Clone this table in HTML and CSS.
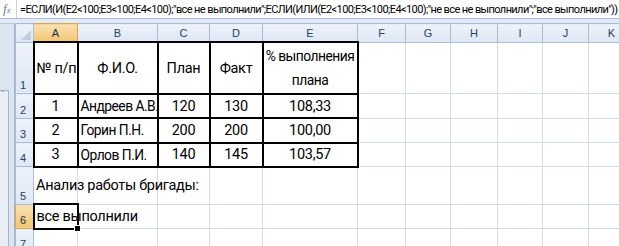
FILE: index.html
```html
<!DOCTYPE html>
<html lang="ru">
<head>
<meta charset="utf-8">
<link rel="stylesheet" href="styles.css">
</head>
<body>
<div class="fbar">
  <span class="fx">f<i>x</i></span>
  <span class="formula">=ЕСЛИ(И(E2&lt;100;E3&lt;100;E4&lt;100);"все не выполнили";ЕСЛИ(ИЛИ(E2&lt;100;E3&lt;100;E4&lt;100);"не все не выполнили";"все выполнили"))</span>
</div>
<div class="main">
  <div class="strip"><div class="strip-box"><span class="caret">&#710;</span></div></div>
  <table class="sheet">
    <colgroup>
      <col class="c-rh"><col class="c-a"><col class="c-b"><col class="c-c"><col class="c-d"><col class="c-e"><col class="c-f"><col class="c-g"><col class="c-h"><col class="c-i"><col class="c-j"><col class="c-k">
    </colgroup>
    <tr class="r-head">
      <th class="corner"><span class="tri"></span></th>
      <th class="ch sel">A</th><th class="ch">B</th><th class="ch">C</th><th class="ch">D</th><th class="ch">E</th><th class="ch">F</th><th class="ch">G</th><th class="ch">H</th><th class="ch">I</th><th class="ch">J</th><th class="ch">K</th>
    </tr>
    <tr class="r1">
      <th class="rh">1</th>
      <td class="t ctr">№ п/п</td><td class="t ctr">Ф.И.О.</td><td class="t ctr">План</td><td class="t ctr">Факт</td><td class="t ctr wrap">% выполнения плана</td>
      <td></td><td></td><td></td><td></td><td></td><td></td>
    </tr>
    <tr class="rd">
      <th class="rh">2</th>
      <td class="t ctr">1</td><td class="t nm">Андреев А.В.</td><td class="t ctr">120</td><td class="t ctr">130</td><td class="t ctr">108,33</td>
      <td></td><td></td><td></td><td></td><td></td><td></td>
    </tr>
    <tr class="rd">
      <th class="rh">3</th>
      <td class="t ctr">2</td><td class="t nm">Горин П.Н.</td><td class="t ctr">200</td><td class="t ctr">200</td><td class="t ctr">100,00</td>
      <td></td><td></td><td></td><td></td><td></td><td></td>
    </tr>
    <tr class="rd">
      <th class="rh">4</th>
      <td class="t ctr">3</td><td class="t nm">Орлов П.И.</td><td class="t ctr">140</td><td class="t ctr">145</td><td class="t ctr">103,57</td>
      <td></td><td></td><td></td><td></td><td></td><td></td>
    </tr>
    <tr class="r5">
      <th class="rh">5</th>
      <td class="ov">Анализ работы бригады:</td><td></td><td></td><td></td><td></td>
      <td></td><td></td><td></td><td></td><td></td><td></td>
    </tr>
    <tr class="rd">
      <th class="rh sel">6</th>
      <td class="ov active">все выполнили<span class="handle"></span></td><td></td><td></td><td></td><td></td>
      <td></td><td></td><td></td><td></td><td></td><td></td>
    </tr>
    <tr class="rd">
      <th class="rh">7</th>
      <td></td><td></td><td></td><td></td><td></td>
      <td></td><td></td><td></td><td></td><td></td><td></td>
    </tr>
  </table>
</div>
</body>
</html>
```
FILE: styles.css
```css
html, body {
  margin: 0;
  padding: 0;
}
body {
  width: 619px;
  height: 246px;
  overflow: hidden;
  background: #e3ebf6;
  font-family: "Liberation Sans", Arial, sans-serif;
}
.fbar {
  height: 18px;
  background: #fff;
  border-bottom: 1px solid #a9bdd6;
  display: flex;
  align-items: center;
  white-space: nowrap;
  overflow: hidden;
}
.fx {
  width: 17px;
  flex: 0 0 17px;
  box-sizing: border-box;
  border-right: 1px solid #c5d2e3;
  height: 18px;
  font-family: "Liberation Serif", serif;
  font-style: italic;
  font-size: 13px;
  color: #6e7f96;
  line-height: 17px;
  padding-left: 3px;
}
.fx i {
  font-size: 9px;
}
.formula {
  padding-left: 3px;
  font-family: Roboto, sans-serif;
  font-size: 11px;
  letter-spacing: -0.6px;
  color: #000;
}
.main {
  display: flex;
  margin-top: 4px;
}
.strip {
  width: 15px;
  flex: 0 0 15px;
  height: 230px;
  box-sizing: border-box;
  background: #dbe5f2;
  border-right: 1px solid #9fb6d2;
  border-top: 1px solid #b7c9df;
  padding-top: 66px;
}
.strip-box {
  width: 9px;
  height: 160px;
  box-sizing: border-box;
  border: 1px solid #a5b4c8;
  border-left: none;
  background: #e9eef5;
  position: relative;
}
.caret {
  position: absolute;
  left: 1px;
  top: -2px;
  font-size: 9px;
  color: #7a8ba3;
}
.sheet {
  border-collapse: collapse;
  table-layout: fixed;
  width: 619px;
  flex: 0 0 619px;
  background: #fff;
  font-family: Roboto, sans-serif;
  font-size: 14.5px;
  letter-spacing: -0.3px;
  color: #000;
}
.c-rh { width: 18px; }
.c-a { width: 44px; }
.c-b { width: 80px; }
.c-c { width: 52px; }
.c-d { width: 53px; }
.c-e { width: 95px; }
.c-f { width: 48px; }
.c-g { width: 45px; }
.c-h { width: 47px; }
.c-i { width: 45px; }
.c-j { width: 46px; }
.c-k { width: 46px; }
.sheet td, .sheet th {
  border: 1px solid #d3dbe6;
  padding: 0 2px;
  white-space: nowrap;
  overflow: hidden;
}
.sheet th {
  font-family: "Liberation Sans", Arial, sans-serif;
  letter-spacing: 0;
  font-weight: normal;
  font-size: 11px;
  color: #27415f;
  background: linear-gradient(#eef3fa, #dde7f4);
  border-color: #a9bdd6;
}
.sheet th.sel {
  background: linear-gradient(#fae2b5, #f3c571);
  border-color: #d9a64e;
  color: #1b2f4a;
}
.r-head th {
  height: 17px;
  text-align: center;
  vertical-align: middle;
}
.corner {
  position: relative;
  padding: 0;
}
.tri {
  position: absolute;
  right: 2px;
  bottom: 2px;
  width: 0;
  height: 0;
  border-left: 10px solid transparent;
  border-bottom: 10px solid #c2cedd;
}
.rh {
  text-align: left;
  vertical-align: bottom;
  padding: 0 0 2px 4px !important;
}
.r1 td { height: 49px; }
.rd td { height: 22px; }
.r5 td { height: 35px; }
.sheet td.t {
  border: 2px solid #000;
}
.sheet td.nm {
  padding: 0 0 0 2px;
  font-size: 13.8px;
  letter-spacing: -0.5px;
}
.ctr { text-align: center; }
.wrap {
  white-space: normal !important;
  line-height: 24px;
  font-size: 13.8px;
  letter-spacing: -0.5px;
}
.sheet td.ov {
  overflow: visible;
  padding-left: 2px;
}
.sheet td.active {
  border: 2px solid #000;
  position: relative;
}
.handle {
  position: absolute;
  right: -4px;
  bottom: -4px;
  width: 5px;
  height: 5px;
  background: #000;
  border: 1px solid #fff;
}
```
